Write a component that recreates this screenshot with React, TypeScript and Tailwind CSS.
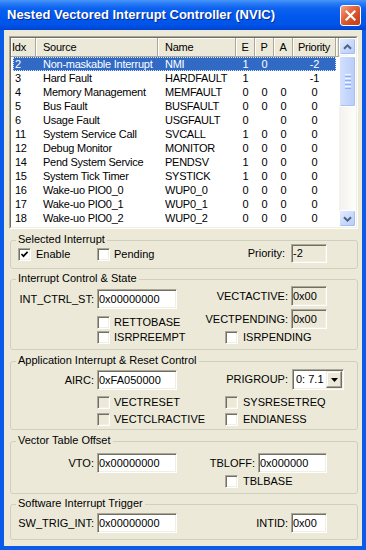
import React from "react";

type R = [string, string, string, string, string, string, string];
const ROWS: R[] = [
  ["2", "Non-maskable Interrupt", "NMI", "1", "0", "", "-2"],
  ["3", "Hard Fault", "HARDFAULT", "1", "", "", "-1"],
  ["4", "Memory Management", "MEMFAULT", "0", "0", "0", "0"],
  ["5", "Bus Fault", "BUSFAULT", "0", "0", "0", "0"],
  ["6", "Usage Fault", "USGFAULT", "0", "", "0", "0"],
  ["11", "System Service Call", "SVCALL", "1", "0", "0", "0"],
  ["12", "Debug Monitor", "MONITOR", "0", "0", "0", "0"],
  ["14", "Pend System Service", "PENDSV", "1", "0", "0", "0"],
  ["15", "System Tick Timer", "SYSTICK", "1", "0", "0", "0"],
  ["16", "Wake-uo PIO0_0", "WUP0_0", "0", "0", "0", "0"],
  ["17", "Wake-uo PIO0_1", "WUP0_1", "0", "0", "0", "0"],
  ["18", "Wake-uo PIO0_2", "WUP0_2", "0", "0", "0", "0"],
];

const HEAD =
  "h-full flex items-center shrink-0 bg-[#ECE9D8] border-r border-b border-r-[#ACA899] border-b-[#ACA899] shadow-[inset_1px_1px_0_#FFFFFF]";

function Check({ checked, disabled }: { checked?: boolean; disabled?: boolean }) {
  return (
    <span
      className={`w-[13px] h-[13px] shrink-0 flex items-center justify-center border border-t-[#ACA899] border-l-[#ACA899] border-b-white border-r-white shadow-[inset_1px_1px_0_#716F64,inset_-1px_-1px_0_#F1EFE2] ${
        disabled ? "bg-[#ECE9D8]" : "bg-white"
      }`}
    >
      {checked && (
        <svg width="9" height="9" viewBox="0 0 9 9">
          <polyline points="1.5,4 3.5,6.2 7.6,1.8" fill="none" stroke="#000" strokeWidth="1.7" />
        </svg>
      )}
    </span>
  );
}

function Edit({ value, cls, ro }: { value: string; cls: string; ro?: boolean }) {
  return (
    <div
      className={`flex items-center pl-[1px] shrink-0 whitespace-nowrap overflow-hidden border border-t-[#ACA899] border-l-[#ACA899] border-b-white border-r-white shadow-[inset_1px_1px_0_#716F64,inset_-1px_-1px_0_#F1EFE2] ${
        ro ? "bg-[#ECE9D8]" : "bg-white"
      } ${cls}`}
    >
      {value}
    </div>
  );
}

function Group({ title, cls, children }: { title: string; cls: string; children: React.ReactNode }) {
  return (
    <div className={`relative ml-[1px] w-[348px] shrink-0 border border-[#D0D0BF] rounded-[3px] ${cls}`}>
      <span className="absolute -top-[8px] left-[5px] px-[2px] leading-[13px] bg-[#ECE9D8] whitespace-nowrap">
        {title}
      </span>
      {children}
    </div>
  );
}

function Chevron({ down }: { down?: boolean }) {
  return (
    <svg width="9" height="6" viewBox="0 0 9 6">
      <path
        d={down ? "M1 1.2 L4.5 4.6 L8 1.2" : "M1 4.8 L4.5 1.4 L8 4.8"}
        fill="none"
        stroke="#4D6185"
        strokeWidth="2"
      />
    </svg>
  );
}

function ScrollBtn({ down }: { down?: boolean }) {
  return (
    <div className="h-[17px] w-[17px] shrink-0 flex items-center justify-center rounded-[2px] border border-white bg-[linear-gradient(135deg,#E3EBFD_0%,#C9DAFC_50%,#B6CBF7_100%)] shadow-[inset_-1px_-1px_0_#A6BDEF]">
      <Chevron down={down} />
    </div>
  );
}

export default function App() {
  return (
    <div className="w-[366px] h-[550px] flex flex-col bg-[#0A5CE8] font-['Liberation_Sans',Arial,sans-serif] text-[11px] leading-[13px] text-black overflow-hidden">
      {/* Title bar */}
      <div className="h-[30px] shrink-0 flex items-start bg-[linear-gradient(to_bottom,#4A96F6_0px,#2C7FF7_3px,#0D63EE_8px,#0058EE_16px,#0055E8_24px,#014BDC_28px,#0042CF_30px)]">
        <span className="mt-[7px] ml-[7px] text-[13px] leading-[16px] font-bold text-white [text-shadow:1px_1px_0_#0B2A8F] whitespace-nowrap">
          Nested Vectored Interrupt Controller (NVIC)
        </span>
        <div className="ml-auto mr-[5px] mt-[5px] w-[21px] h-[21px] rounded-[3px] border border-white flex items-center justify-center bg-[linear-gradient(135deg,#F2A389_0%,#E4673F_38%,#D04A22_70%,#C43E17_100%)]">
          <svg width="11" height="11" viewBox="0 0 11 11">
            <path d="M1.5 1.5 L9.5 9.5 M9.5 1.5 L1.5 9.5" stroke="#FFFFFF" strokeWidth="2.2" strokeLinecap="square" />
          </svg>
        </div>
      </div>

      {/* Client area */}
      <div className="flex-1 mx-[4px] mb-[4px] bg-[#ECE9D8] flex flex-col px-[5px]">
        {/* List view */}
        <div className="mt-[6px] w-[349px] h-[193px] shrink-0 flex border border-t-[#ACA899] border-l-[#ACA899] border-b-white border-r-white">
          <div className="flex-1 flex bg-white border border-t-[#716F64] border-l-[#716F64] border-b-[#F1EFE2] border-r-[#F1EFE2]">
            <div className="w-[328px] flex flex-col tracking-[-0.25px]">
              <div className="h-[19px] flex shrink-0">
                <div className={`${HEAD} w-[25px] pl-[1px]`}>Idx</div>
                <div className={`${HEAD} w-[122px] pl-[7px]`}>Source</div>
                <div className={`${HEAD} w-[78px] pl-[7px]`}>Name</div>
                <div className={`${HEAD} w-[19px] justify-center`}>E</div>
                <div className={`${HEAD} w-[19px] justify-center`}>P</div>
                <div className={`${HEAD} w-[19px] justify-center`}>A</div>
                <div className={`${HEAD} w-[43px] justify-center`}>Priority</div>
                <div className={`${HEAD} flex-1`}></div>
              </div>
              {ROWS.map((r, i) => (
                <div
                  key={r[0]}
                  className={`ml-[2px] w-[323px] h-[14px] flex items-center leading-[14px] whitespace-nowrap ${
                    i === 0
                      ? "bg-[#316AC5] text-white outline outline-1 outline-dotted outline-[#DCE4F5] -outline-offset-1"
                      : ""
                  }`}
                >
                  <span className="w-[23px] pl-[2px] shrink-0">{r[0]}</span>
                  <span className="w-[122px] pl-[7px] shrink-0 overflow-hidden">{r[1]}</span>
                  <span className="w-[78px] pl-[7px] shrink-0 overflow-hidden">{r[2]}</span>
                  <span className="w-[19px] text-center shrink-0">{r[3]}</span>
                  <span className="w-[19px] text-center shrink-0">{r[4]}</span>
                  <span className="w-[19px] text-center shrink-0">{r[5]}</span>
                  <span className="w-[43px] text-center shrink-0">{r[6]}</span>
                </div>
              ))}
            </div>
            {/* Scrollbar */}
            <div className="w-[17px] flex flex-col bg-[linear-gradient(to_right,#F3F1EC,#FEFEFB)]">
              <ScrollBtn />
              <div className="mt-[1px] h-[51px] w-[17px] rounded-[2px] border border-white bg-[linear-gradient(to_right,#D3E0FD,#C5D6FC_50%,#B9CDF8)] shadow-[inset_-1px_-1px_0_#A9C0F0] flex flex-col items-center justify-center gap-[1px]">
                <span className="w-[6px] h-[1px] bg-[#EEF4FE]"></span>
                <span className="w-[6px] h-[1px] bg-[#8CB0F8]"></span>
                <span className="w-[6px] h-[1px] bg-[#EEF4FE]"></span>
                <span className="w-[6px] h-[1px] bg-[#8CB0F8]"></span>
                <span className="w-[6px] h-[1px] bg-[#EEF4FE]"></span>
                <span className="w-[6px] h-[1px] bg-[#8CB0F8]"></span>
                <span className="w-[6px] h-[1px] bg-[#EEF4FE]"></span>
                <span className="w-[6px] h-[1px] bg-[#8CB0F8]"></span>
              </div>
              <div className="flex-1"></div>
              <ScrollBtn down />
            </div>
          </div>
        </div>

        {/* Selected Interrupt */}
        <Group title="Selected Interrupt" cls="mt-[11px] h-[29px]">
          <div className="flex items-start">
            <div className="mt-[7px] ml-[7px] w-[79px] shrink-0 flex items-center gap-[5px]">
              <Check checked />
              <span>Enable</span>
            </div>
            <div className="mt-[7px] w-[120px] shrink-0 flex items-center gap-[4px]">
              <Check />
              <span>Pending</span>
            </div>
            <div className="mt-[3px] flex items-center">
              <span className="w-[68px] text-right">Priority:</span>
              <Edit value="-2" ro cls="ml-[6px] w-[36px] h-[19px]" />
            </div>
          </div>
        </Group>

        {/* Interrupt Control & State */}
        <Group title="Interrupt Control & State" cls="mt-[10px] h-[71px]">
          <div className="flex items-start h-[29px]">
            <div className="mt-[9px] flex items-center">
              <span className="w-[83px] text-right">INT_CTRL_ST:</span>
              <Edit value="0x00000000" cls="ml-[3px] w-[80px] h-[20px]" />
            </div>
            <div className="mt-[6px] flex items-center">
              <span className="w-[111px] text-right">VECTACTIVE:</span>
              <Edit value="0x00" ro cls="ml-[3px] w-[36px] h-[20px]" />
            </div>
          </div>
          <div className="flex items-start h-[20px]">
            <div className="mt-[7px] ml-[86px] w-[80px] shrink-0 flex items-center gap-[4px] whitespace-nowrap">
              <Check />
              <span>RETTOBASE</span>
            </div>
            <div className="flex items-center">
              <span className="w-[111px] text-right">VECTPENDING:</span>
              <Edit value="0x00" ro cls="ml-[3px] w-[36px] h-[20px]" />
            </div>
          </div>
          <div className="flex items-start mt-[2px]">
            <div className="ml-[86px] w-[128px] shrink-0 flex items-center gap-[4px]">
              <Check />
              <span>ISRPREEMPT</span>
            </div>
            <div className="flex items-center gap-[5px]">
              <Check />
              <span>ISRPENDING</span>
            </div>
          </div>
        </Group>

        {/* Application Interrupt & Reset Control */}
        <Group title="Application Interrupt & Reset Control" cls="mt-[11px] h-[69px]">
          <div className="flex items-start h-[28px]">
            <div className="mt-[8px] flex items-center">
              <span className="w-[83px] text-right">AIRC:</span>
              <Edit value="0xFA050000" cls="ml-[3px] w-[80px] h-[20px]" />
            </div>
            <div className="mt-[7px] flex items-center">
              <span className="w-[111px] text-right">PRIGROUP:</span>
              <div className="ml-[4px] w-[52px] h-[21px] flex bg-white border border-t-[#ACA899] border-l-[#ACA899] border-b-white border-r-white shadow-[inset_1px_1px_0_#716F64,inset_-1px_-1px_0_#F1EFE2] p-[1px]">
                <span className="flex-1 pl-[2px] flex items-center">0: 7.1</span>
                <span className="w-[16px] h-full flex items-center justify-center bg-[#ECE9D8] border border-t-[#F1EFE2] border-l-[#F1EFE2] border-b-[#716F64] border-r-[#716F64] shadow-[inset_-1px_-1px_0_#ACA899,inset_1px_1px_0_#FFFFFF]">
                  <svg width="7" height="4" viewBox="0 0 7 4">
                    <path d="M0 0 H7 L3.5 4 Z" fill="#000" />
                  </svg>
                </span>
              </div>
            </div>
          </div>
          <div className="flex items-start mt-[6px]">
            <div className="ml-[86px] w-[128px] shrink-0 flex items-center gap-[4px]">
              <Check disabled />
              <span>VECTRESET</span>
            </div>
            <div className="flex items-center gap-[5px]">
              <Check disabled />
              <span>SYSRESETREQ</span>
            </div>
          </div>
          <div className="flex items-start mt-[4px]">
            <div className="ml-[86px] w-[128px] shrink-0 flex items-center gap-[4px]">
              <Check disabled />
              <span>VECTCLRACTIVE</span>
            </div>
            <div className="flex items-center gap-[5px]">
              <Check />
              <span>ENDIANESS</span>
            </div>
          </div>
        </Group>

        {/* Vector Table Offset */}
        <Group title="Vector Table Offset" cls="mt-[11px] h-[53px]">
          <div className="flex items-start mt-[11px] h-[20px]">
            <div className="flex items-center">
              <span className="w-[83px] text-right">VTO:</span>
              <Edit value="0x00000000" cls="ml-[3px] w-[80px] h-[20px]" />
            </div>
            <div className="flex items-center">
              <span className="w-[78px] text-right">TBLOFF:</span>
              <Edit value="0x000000" cls="ml-[3px] w-[69px] h-[20px]" />
            </div>
          </div>
          <div className="flex items-center mt-[2px] ml-[214px] gap-[5px]">
            <Check />
            <span>TBLBASE</span>
          </div>
        </Group>

        {/* Software Interrupt Trigger */}
        <Group title="Software Interrupt Trigger" cls="mt-[10px] h-[36px]">
          <div className="flex items-start mt-[8px] h-[20px]">
            <div className="flex items-center">
              <span className="w-[83px] text-right">SW_TRIG_INT:</span>
              <Edit value="0x00000000" cls="ml-[3px] w-[80px] h-[20px]" />
            </div>
            <div className="flex items-center">
              <span className="w-[111px] text-right">INTID:</span>
              <Edit value="0x00" cls="ml-[3px] w-[36px] h-[20px]" />
            </div>
          </div>
        </Group>
      </div>
    </div>
  );
}
